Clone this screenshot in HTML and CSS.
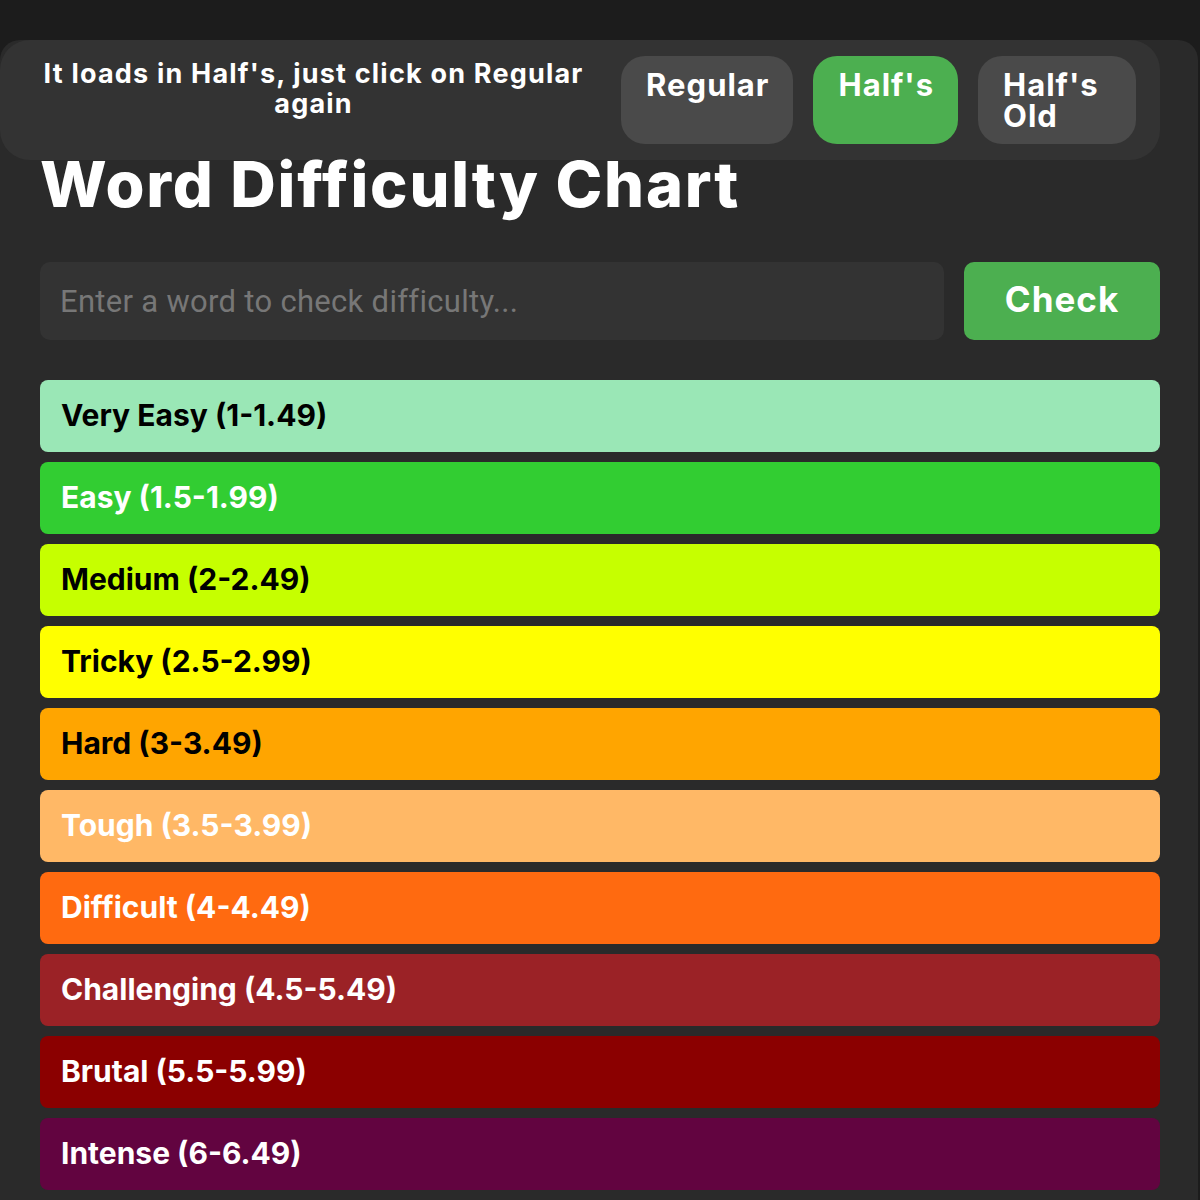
FILE: index.html
```html
<!DOCTYPE html>
<html lang="en">
<head>
    <meta charset="UTF-8">
    <meta name="viewport" content="width=device-width, initial-scale=1.0">
    <title>Word Difficulty Chart</title>
    <link rel="stylesheet" href="styles.css">
</head>
<body>

<div class="page">
    <div class="mode-bar">
        <p class="mode-note">It loads in Half's, just click on Regular again</p>
        <button class="mode-btn" type="button">Regular</button>
        <button class="mode-btn active" type="button">Half's</button>
        <button class="mode-btn old" type="button">Half's Old</button>
    </div>

    <div class="content">
        <h1>Word Difficulty Chart</h1>

        <form class="check-form" onsubmit="event.preventDefault()">
            <input type="text" placeholder="Enter a word to check difficulty...">
            <button type="submit">Check</button>
        </form>

        <div class="levels">
            <div class="level very-easy">Very Easy (1-1.49)</div>
            <div class="level easy">Easy (1.5-1.99)</div>
            <div class="level medium">Medium (2-2.49)</div>
            <div class="level tricky">Tricky (2.5-2.99)</div>
            <div class="level hard">Hard (3-3.49)</div>
            <div class="level tough">Tough (3.5-3.99)</div>
            <div class="level difficult">Difficult (4-4.49)</div>
            <div class="level challenging">Challenging (4.5-5.49)</div>
            <div class="level brutal">Brutal (5.5-5.99)</div>
            <div class="level intense">Intense (6-6.49)</div>
        </div>
    </div>
</div>

</body>
</html>
```

FILE: styles.css
```css
body {
    margin: 0;
    background-color: #1c1c1c;
    font-family: 'Inter', 'Liberation Sans', sans-serif;
    color: #fff;
}
.page {
    margin-top: 40px;
    margin-right: 2px;
    background-color: #2a2a2a;
    border-radius: 20px 20px 0 0;
    min-height: 1200px;
}
.mode-bar {
    display: flex;
    align-items: stretch;
    gap: 20px;
    width: 1160px;
    box-sizing: border-box;
    padding: 16px 24px 16px 26px;
    background-color: #333;
    border-radius: 30px;
}
.mode-note {
    flex: 1;
    margin: 0;
    padding-top: 3px;
    text-align: center;
    font-size: 27px;
    font-weight: 700;
    letter-spacing: 1.2px;
    line-height: 30px;
}
.mode-btn {
    flex: none;
    display: flex;
    align-items: flex-start;
    padding: 13px 24px 13px 25px;
    background-color: #4a4a4a;
    border: none;
    border-radius: 24px;
    color: #fff;
    font-family: inherit;
    font-size: 31px;
    font-weight: 700;
    letter-spacing: 1px;
    line-height: 31px;
    text-align: left;
    cursor: pointer;
}
.mode-btn.active {
    background-color: #4caf50;
}
.mode-btn.old {
    width: 158px;
}
.content {
    padding: 0 38px 0 40px;
}
.content h1 {
    margin: -12px 0 42px;
    font-size: 63px;
    font-weight: 800;
    letter-spacing: 1.8px;
    line-height: 72px;
}
.check-form {
    display: flex;
    gap: 20px;
    margin-bottom: 40px;
}
.check-form input {
    flex: 1;
    height: 78px;
    padding: 0 20px;
    box-sizing: border-box;
    background-color: #333;
    border: none;
    border-radius: 10px;
    color: #fff;
    font-family: 'Roboto', sans-serif;
    font-size: 31px;
    letter-spacing: 0.3px;
    outline: none;
}
.check-form input::placeholder {
    color: #777;
}
.check-form button {
    width: 196px;
    height: 78px;
    padding-bottom: 6px;
    background-color: #4caf50;
    border: none;
    border-radius: 10px;
    color: #fff;
    font-family: inherit;
    font-size: 35px;
    font-weight: 700;
    letter-spacing: 1px;
    cursor: pointer;
}
.levels {
    display: flex;
    flex-direction: column;
    gap: 10px;
}
.level {
    display: flex;
    align-items: center;
    height: 72px;
    padding: 0 21px 2px;
    box-sizing: border-box;
    border-radius: 8px;
    font-size: 30px;
    font-weight: 700;
    color: #fff;
}
.very-easy { background-color: #9ae7b6; color: #000; }
.easy { background-color: #32cd32; }
.medium { background-color: #c6ff00; color: #000; }
.tricky { background-color: #ffff00; color: #000; }
.hard { background-color: #ffa500; color: #000; }
.tough { background-color: #ffb866; }
.difficult { background-color: #ff6a10; }
.challenging { background-color: #9b2226; }
.brutal { background-color: #8b0000; }
.intense { background-color: #620440; }
```
